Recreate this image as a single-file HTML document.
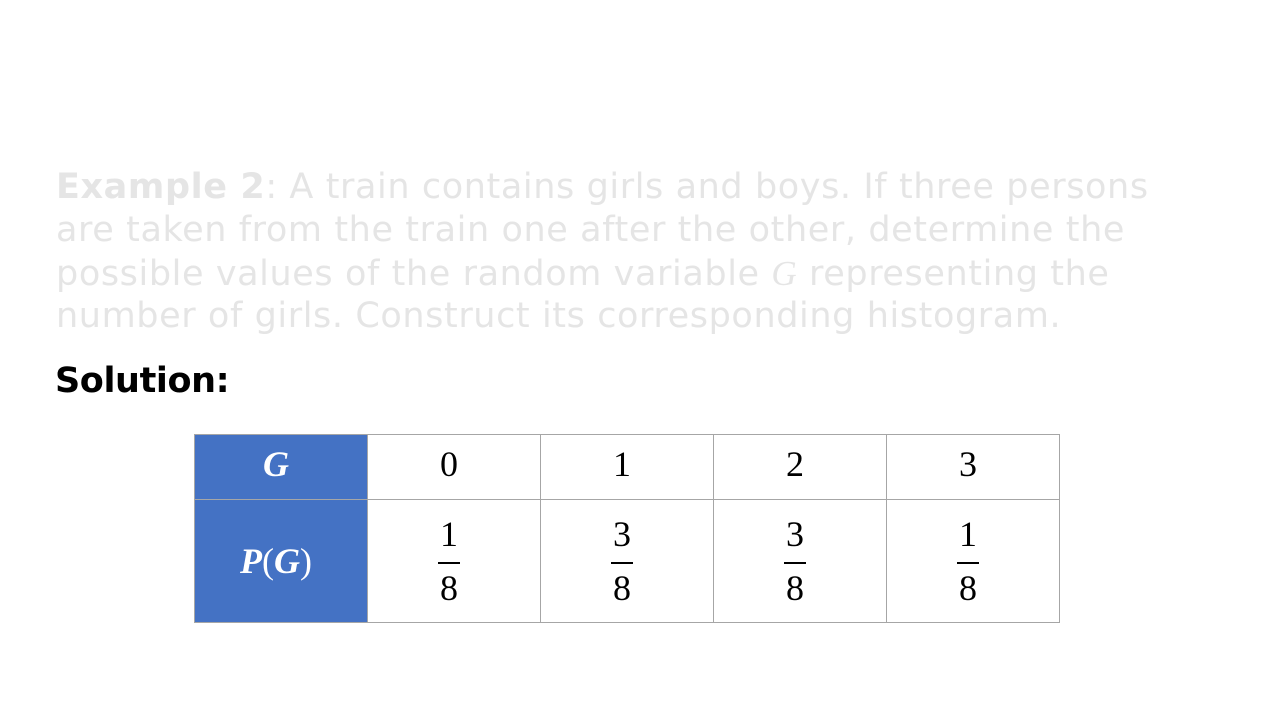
<!DOCTYPE html>
<html><head><style>
body{margin:0;width:1280px;height:720px;background:#fff;position:relative;overflow:hidden}
.l{position:absolute;left:56px;font-family:"DejaVu Sans",sans-serif;font-size:35px;color:#e5e5e5;white-space:nowrap;letter-spacing:0.6px;line-height:43px}
.l b{font-weight:bold}
.sol{position:absolute;left:55px;top:361px;font-family:"DejaVu Sans",sans-serif;font-weight:bold;font-size:35px;color:#000;letter-spacing:-0.4px}
table{position:absolute;left:194px;top:434px;border-collapse:collapse;font-family:"Liberation Serif",serif;font-size:36px;table-layout:fixed;width:865px}
td{border:1px solid #a6a6a6;width:173px;text-align:center;padding:0 10px 0 0;box-sizing:border-box}
tr.a td{height:65px;padding-bottom:6px}
tr.b td{height:123px}
td.h{background:#4472c4;color:#fff;font-weight:bold;font-style:italic;border-color:#a6a6a6}
.f{display:inline-block;vertical-align:middle;line-height:36px}
.f span{display:block;padding:0 2px}
.f .n{border-bottom:2px solid #000;margin-bottom:6px;padding-bottom:10px}
</style></head><body>
<div class="l" style="top:166px"><b>Example 2</b>: A train contains girls and boys. If three persons</div>
<div class="l" style="top:209px">are taken from the train one after the other, determine the</div>
<div class="l" style="top:252px">possible values of the random variable <i style="font-family:'Liberation Serif',serif">G</i> representing the</div>
<div class="l" style="top:295px">number of girls. Construct its corresponding histogram.</div>
<div class="sol">Solution:</div>
<table>
<tr class="a"><td class="h">G</td><td>0</td><td>1</td><td>2</td><td>3</td></tr>
<tr class="b"><td class="h">P<span style="font-style:normal;font-weight:normal">(</span>G<span style="font-style:normal;font-weight:normal">)</span></td>
<td><div class="f"><span class="n">1</span><span>8</span></div></td>
<td><div class="f"><span class="n">3</span><span>8</span></div></td>
<td><div class="f"><span class="n">3</span><span>8</span></div></td>
<td><div class="f"><span class="n">1</span><span>8</span></div></td></tr>
</table>
</body></html>
